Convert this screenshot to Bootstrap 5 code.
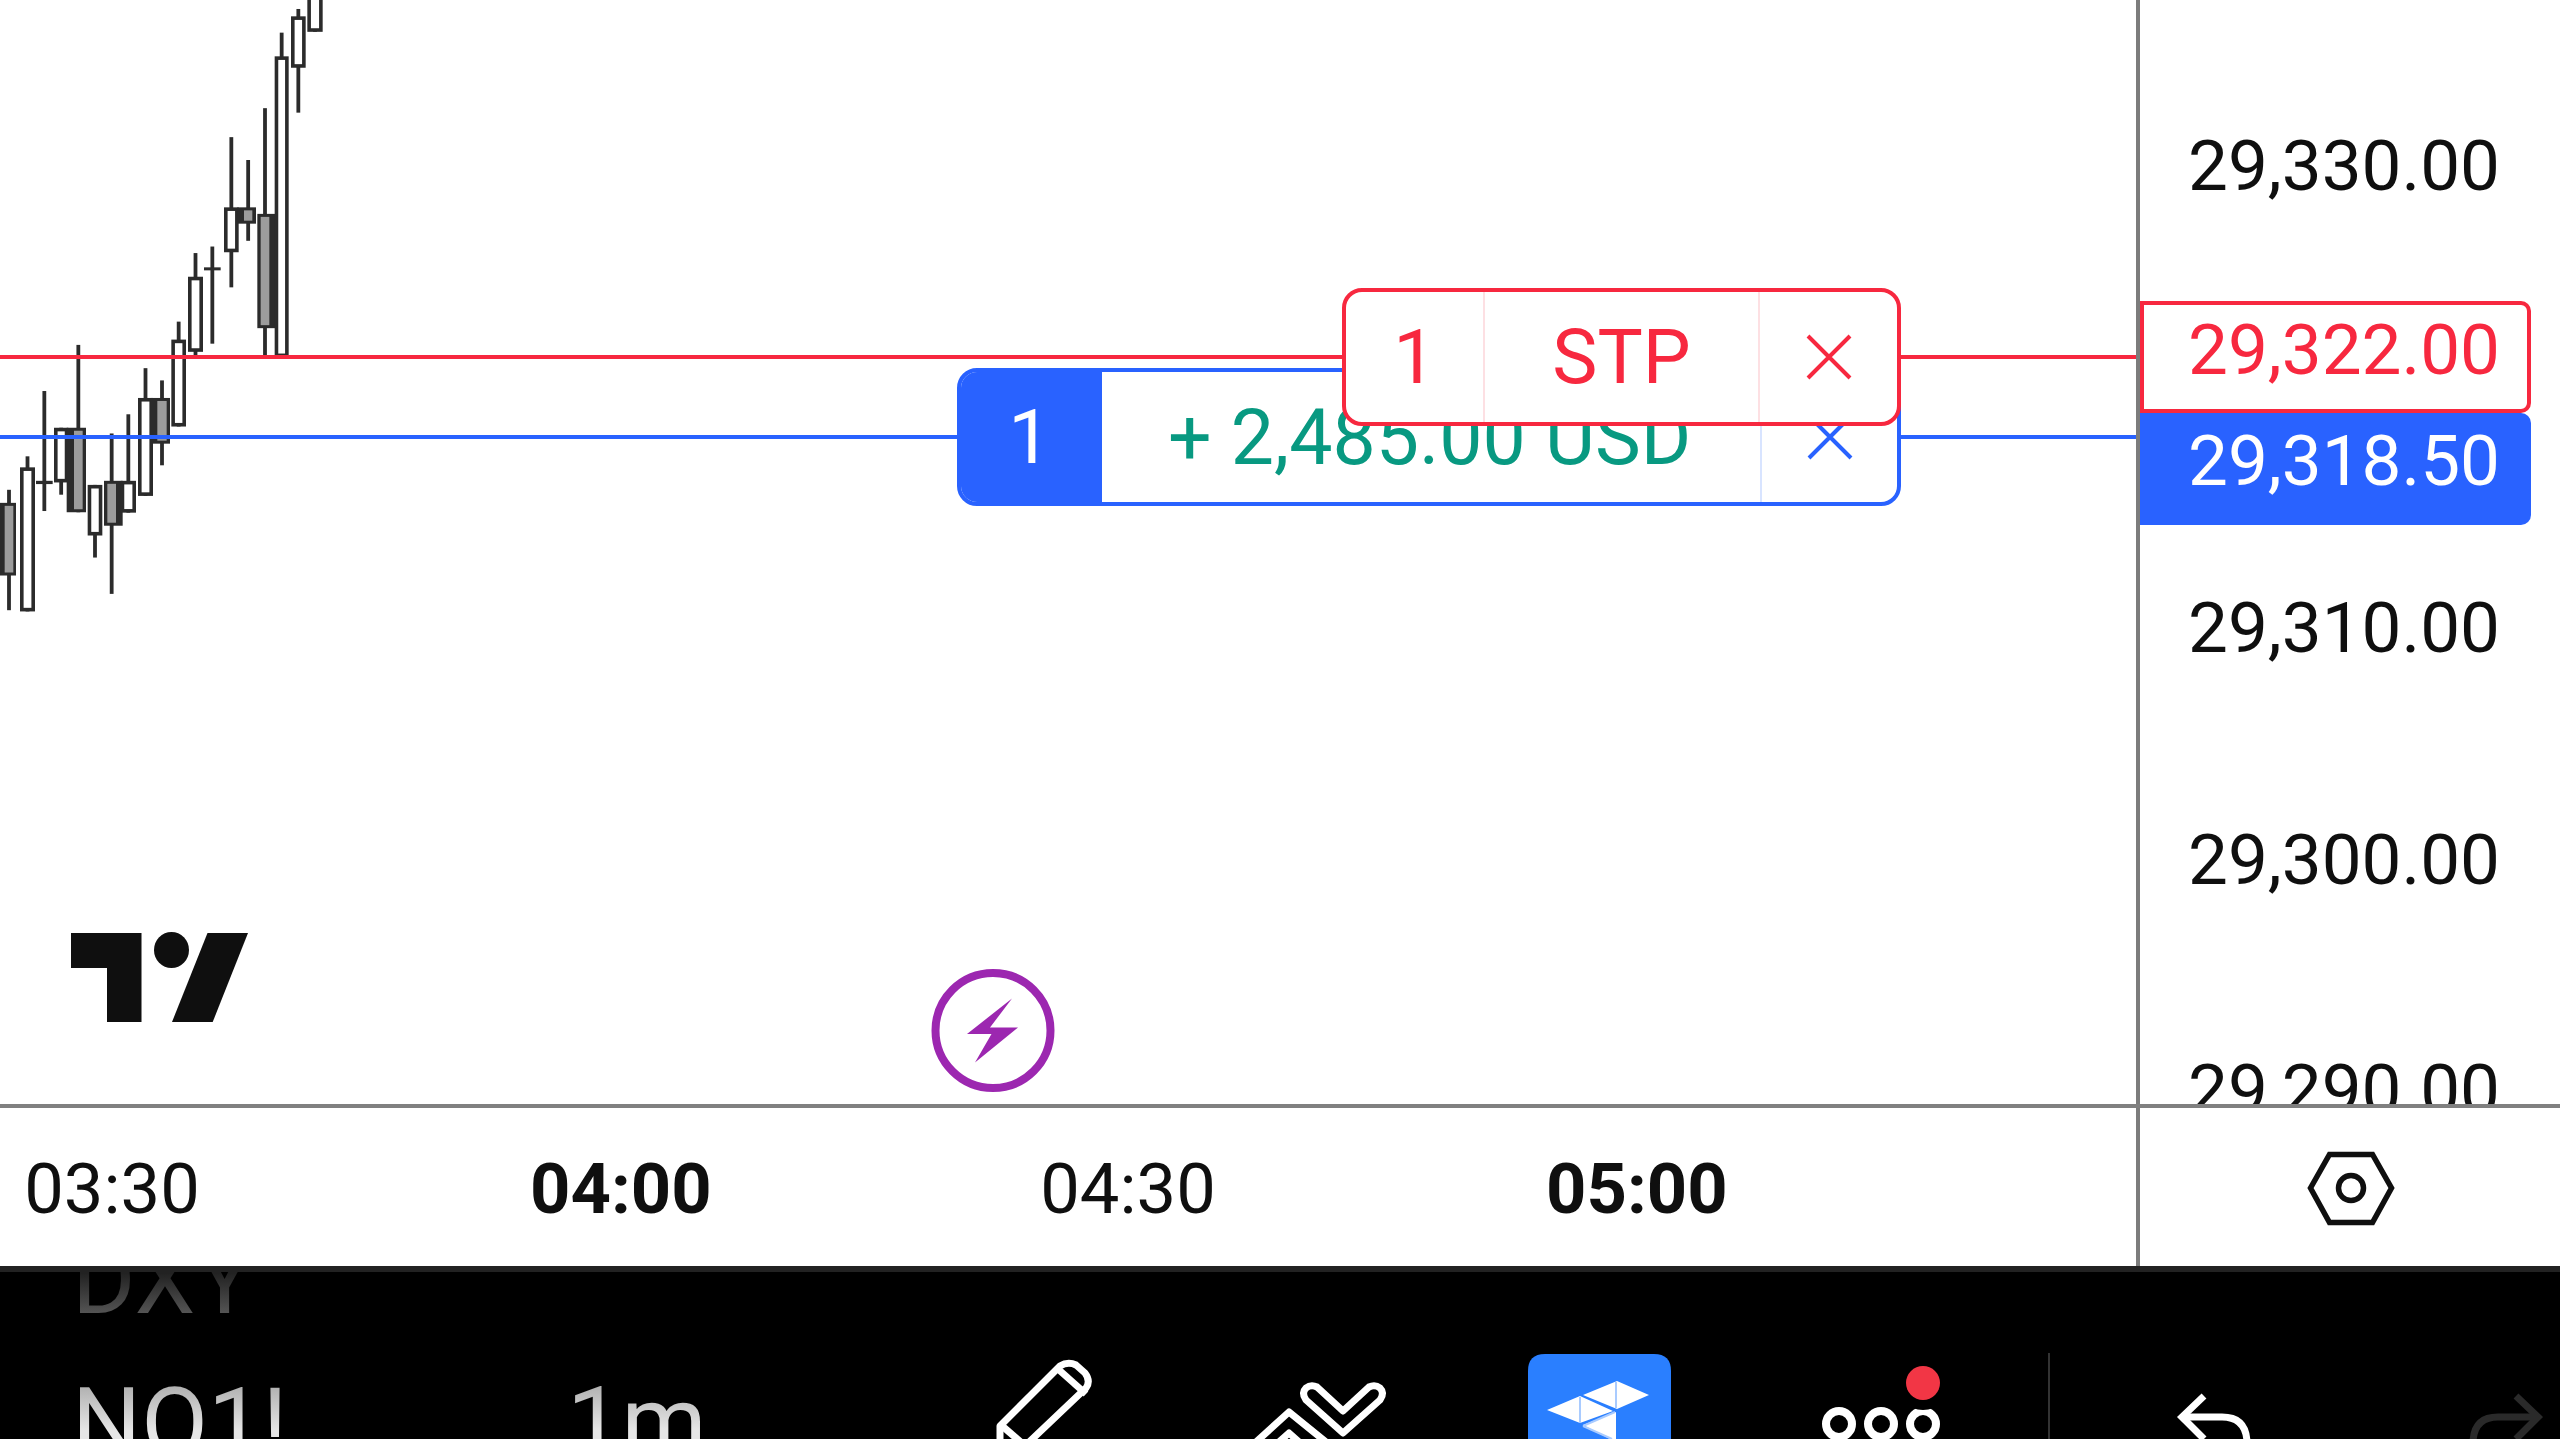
<!DOCTYPE html>
<html lang="en">
<head>
<meta charset="utf-8">
<title>Chart</title>
<link href="https://cdn.jsdelivr.net/npm/bootstrap@5.3.0/dist/css/bootstrap.min.css" rel="stylesheet">
<style>
html,body{margin:0;height:1439px;width:2560px;overflow:hidden;background:#fff}
body,.app-shell{font-family:Roboto,"Liberation Sans",sans-serif;color:#0f0f0f;font-size:71px}
.app-shell{width:2560px;height:1439px}
.plot-row{height:1108px;border-bottom:4px solid #808080}
.pane{width:2136px;height:100%}
.axis-y{width:424px;height:100%;border-left:4px solid #7c7c7c}
.canvas-svg{position:absolute;left:0;top:0}
.h-line{position:absolute;left:0;width:2136px;height:4px}
.h-red{top:355px;background:#f7283f}
.h-blue{top:435px;background:#2962ff}
.order-box{position:absolute;display:flex;height:138px;background:#fff;border-radius:20px;overflow:hidden;line-height:1;font-size:76px}
.order-pos{left:957px;top:368px;width:944px;border:4px solid #2962ff}
.order-stp{left:1342px;top:288px;width:559px;border:4px solid #f7283f;color:#f7283f}
.cell-qty-b{width:145px;margin:-4px 0 -4px -4px;background:#2962ff;color:#fff}
.cell-pnl{width:658px;color:#089981;padding-left:66px;white-space:nowrap;padding-top:2px;font-size:77px}
.cell-x-b{flex:1;border-left:2px solid #d8e4ff}
.cell-qty-r{width:139px;border-right:2px solid #fde0e3}
.cell-stp{width:275px;border-right:2px solid #fde0e3}
.cell-x-r{flex:1}
.price-tick{position:absolute;right:60px;line-height:68px;white-space:nowrap}
.price-flag{position:absolute;left:0;width:391px;height:112px;border-radius:0 10px 10px 0}
.flag-red{top:301px;border:4px solid #f7283f;background:#fff}
.flag-blue{top:413px;background:#2962ff}
.tick-red{color:#f7283f;top:316px}
.tick-blue{color:#fff;top:427px}
.time-row{height:158px}
.time-pane{width:2136px;height:100%;padding-left:22px;padding-top:5px;gap:328px;font-size:70.500px}
.time-tick{width:180px;text-align:center;line-height:1}
.time-strong{font-weight:700}
.time-corner{width:424px;height:100%;border-left:4px solid #7c7c7c}
.tool-foot{height:173px;background:#000;border-top:6px solid #222;overflow:hidden;font-size:97px}
.ticker{width:567px;padding-left:72px;margin-top:-63px;line-height:143px;flex:none}
.ticker-dim,.ticker-main,.interval{-webkit-background-clip:text;background-clip:text;color:transparent}
.ticker-dim{background-image:linear-gradient(180deg,#222 45%,#585858 75%)}
.ticker-main{background-image:linear-gradient(180deg,#aaa 20%,#e6e6e6 55%)}
.interval{width:423px;flex:none;margin-top:79px;line-height:143px;background-image:linear-gradient(180deg,#aaa 20%,#e6e6e6 55%)}
.tools{margin-top:81px}
.tools svg{display:block;flex:none}
.gap-a{margin-left:150px}.gap-b{margin-left:133px}.gap-c{margin-left:149px}.gap-d{margin-left:103px}.gap-e{margin-left:120px}.gap-f{margin-left:210px}
</style>
</head>
<body>
<div class="app-shell d-flex flex-column">
  <div class="plot-row d-flex">
    <div class="pane position-relative overflow-hidden">
      <svg id="candles" class="canvas-svg" width="420" height="640" viewBox="0 0 420 640"></svg>
      <div class="h-line h-red"></div>
      <div class="h-line h-blue"></div>
      <svg class="canvas-svg" width="2136" height="1104" viewBox="0 0 2136 1104">
        <path fill="#0f0f0f" d="M71 933H141.500V1022H107V968H71Z"/>
        <ellipse fill="#0f0f0f" cx="171.500" cy="950" rx="17.500" ry="18"/>
        <path fill="#0f0f0f" d="M207.500 933H248L212.700 1022H172Z"/>
        <circle cx="993" cy="1030.500" r="57.500" fill="none" stroke="#9c27b0" stroke-width="8"/>
        <path fill="#9c27b0" d="M1012 998.500L967 1034H991.500L975 1062.500L1018 1027.500H990Z"/>
      </svg>
      <div class="order-box order-pos">
        <div class="cell-qty-b d-flex align-items-center justify-content-center">1</div>
        <div class="cell-pnl d-flex align-items-center">+ 2,485.00 USD</div>
        <div class="cell-x-b d-flex align-items-center justify-content-center">
          <svg width="46" height="46" viewBox="0 0 46 46"><path d="M2 2L44 44M44 2L2 44" stroke="#2962ff" stroke-width="4" fill="none"/></svg>
        </div>
      </div>
      <div class="order-box order-stp">
        <div class="cell-qty-r d-flex align-items-center justify-content-center">1</div>
        <div class="cell-stp d-flex align-items-center justify-content-center">STP</div>
        <div class="cell-x-r d-flex align-items-center justify-content-center">
          <svg width="46" height="46" viewBox="0 0 46 46"><path d="M2 2L44 44M44 2L2 44" stroke="#f7283f" stroke-width="4" fill="none"/></svg>
        </div>
      </div>
    </div>
    <div class="axis-y position-relative overflow-hidden">
      <div class="price-tick" style="top:132px">29,330.00</div>
      <div class="price-flag flag-red"></div>
      <div class="price-flag flag-blue"></div>
      <div class="price-tick tick-red">29,322.00</div>
      <div class="price-tick tick-blue">29,318.50</div>
      <div class="price-tick" style="top:594px">29,310.00</div>
      <div class="price-tick" style="top:826px">29,300.00</div>
      <div class="price-tick" style="top:1056px">29,290.00</div>
    </div>
  </div>
  <div class="time-row d-flex">
    <div class="time-pane d-flex align-items-center">
      <div class="time-tick">03:30</div>
      <div class="time-tick time-strong">04:00</div>
      <div class="time-tick">04:30</div>
      <div class="time-tick time-strong">05:00</div>
    </div>
    <div class="time-corner d-flex align-items-center">
      <svg width="420" height="158" viewBox="2140 1108 420 158" style="flex:none">
        <path d="M2310.500 1188L2329.500 1154.500H2372.500L2391.500 1188L2372.500 1222.500H2329.500Z" fill="none" stroke="#0f0f0f" stroke-width="5.500"/>
        <circle cx="2351" cy="1188" r="12.500" fill="none" stroke="#0f0f0f" stroke-width="5.500"/>
      </svg>
    </div>
  </div>
  <div class="tool-foot d-flex align-items-start">
    <div class="ticker">
      <div class="ticker-dim">DXY</div>
      <div class="ticker-main">NO1!</div>
    </div>
    <div class="interval">1m</div>
    <div class="tools d-flex">
      <svg width="110" height="86" viewBox="990 1353 110 86" fill="none" stroke="#fff" stroke-width="7" stroke-linejoin="round">
        <path d="M1000 1445V1426L1060 1366Q1068 1361 1076 1365L1085 1373Q1091 1381 1086 1388L1026 1445"/>
        <path d="M1058 1369L1086 1394"/>
        <path d="M1001 1425L1030 1450"/>
      </svg>
      <svg class="gap-a" width="145" height="86" viewBox="1250 1353 145 86" fill="none" stroke="#fff" stroke-width="7" stroke-linejoin="round">
        <path d="M1343 1433L1306 1400Q1301 1393 1306 1388Q1311 1384 1317 1387L1343 1411L1369 1387Q1375 1384 1380 1388Q1385 1393 1380 1400Z"/>
        <path d="M1256 1442L1289 1412L1326 1442"/>
        <path d="M1270 1450L1289 1433L1308 1450"/>
      </svg>
      <svg class="gap-b" width="143" height="86" viewBox="1528 1353 143 86">
        <path fill="#2a7fff" d="M1528 1439V1371Q1528 1354 1545 1354H1654Q1671 1354 1671 1371V1439Z"/>
        <path fill="#fff" d="M1617 1381L1649 1395L1617 1409L1583 1395ZM1547 1410L1580 1396L1613 1411L1580 1423ZM1583 1425L1616 1412V1439H1610Z"/>
        <path fill="none" stroke="#a9cbff" stroke-width="2" d="M1616 1382V1408M1580 1397V1423M1583 1426L1615 1412M1583 1426L1612 1439"/>
      </svg>
      <svg class="gap-c" width="125" height="86" viewBox="1820 1353 125 86" fill="none" stroke="#fff" stroke-width="8">
        <circle cx="1839" cy="1424" r="13"/><circle cx="1881" cy="1424" r="13"/><circle cx="1923" cy="1424" r="13"/>
        <circle cx="1923" cy="1383" r="27" fill="#000" stroke="none"/>
        <circle cx="1923" cy="1383" r="17" fill="#f23645" stroke="none"/>
      </svg>
      <svg class="gap-d" width="2" height="86" viewBox="0 0 2 86"><rect width="2" height="86" fill="#333"/></svg>
      <svg class="gap-e" width="85" height="86" viewBox="2170 1353 85 86" fill="none" stroke="#fff" stroke-width="7">
        <path d="M2204 1396L2182 1417L2204 1439"/>
        <path d="M2182 1417H2222Q2246 1417 2247 1442"/>
      </svg>
      <svg class="gap-f" width="80" height="86" viewBox="2465 1353 80 86" fill="none" stroke="#2a2a2a" stroke-width="7">
        <path d="M2516 1396L2538 1417L2516 1439"/>
        <path d="M2538 1417H2498Q2474 1417 2473 1442"/>
      </svg>
    </div>
  </div>
</div>
<script>
/* candle data read from the chart: [x0,x1,wickTop,bodyTop,bodyBottom,wickBottom,grayX0,grayX1] */
const data=[
[-6,48,1200,1232,1410,1495,14,40],
[60,105,1118,1145,1498,1498],
[108,158,958,1178,1186,1252,'d'],
[162,205,1048,1048,1182,1212],
[200,258,845,1048,1255,1255,222,248],
[263,307,1188,1188,1312,1366],
[312,368,1062,1178,1288,1455,322,348],
[362,408,1015,1178,1256,1256],
[414,459,902,975,1215,1215],
[452,510,932,975,1087,1140,472,500],
[514,558,788,832,1045,1045],
[564,609,620,678,862,870],
[612,662,604,655,661,842,'d'],
[672,716,336,508,618,704],
[712,768,392,508,548,590,732,757],
[772,826,265,524,804,875,782,808],
[824,866,80,138,875,875],
[873,917,22,40,166,276],
[922,968,-60,-60,78,78]
];
const sx=1/3,sy=1/2.45,ns='http://www.w3.org/2000/svg',svg=document.getElementById('candles');
function r(x,y,w,h,f){const e=document.createElementNS(ns,'rect');e.setAttribute('x',x);e.setAttribute('y',y);e.setAttribute('width',w);e.setAttribute('height',h);e.setAttribute('fill',f);svg.appendChild(e)}
const dk='#2b2b2b';
data.forEach(d=>{
  const x0=d[0]*sx,x1=d[1]*sx,cx=(d[6]&&d[6]!=='d')?(d[6]+d[7])/2*sx:(x0+x1)/2;
  const t=d[3]*sy,b=d[4]*sy;
  r(cx-1.9,d[2]*sy,3.8,(d[5]-d[2])*sy,dk);
  if(d[6]==='d'){r(x0,t,x1-x0,Math.max(b-t,3),dk);return}
  r(x0,t,x1-x0,b-t,dk);
  if(d[6]) r(d[6]*sx,t+3,(d[7]-d[6])*sx,b-t-6,'#9c9c9c');
  else r(x0+3.6,t+3.6,x1-x0-7.2,b-t-7.2,'#fff');
});
</script>
<script src="https://cdn.jsdelivr.net/npm/bootstrap@5.3.0/dist/js/bootstrap.bundle.min.js"></script>
</body>
</html>
